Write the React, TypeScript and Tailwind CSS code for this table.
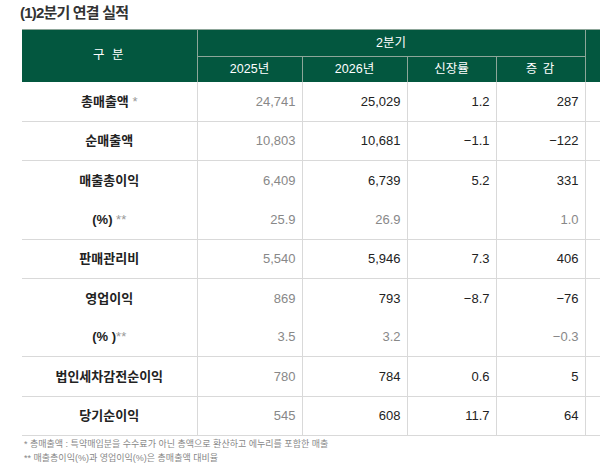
const font = { fontFamily: '"Liberation Sans", "Noto Sans CJK KR", sans-serif' };

type Row = {
  label: string;
  mark?: string;
  v: [string, string, string, string];
  sub?: boolean;
  line: boolean;
  h: string;
};

const rows: Row[] = [
  { label: "총매출액", mark: " *", v: ["24,741", "25,029", "1.2", "287"], line: true, h: "h-[40px]" },
  { label: "순매출액", v: ["10,803", "10,681", "\u22121.1", "\u2212122"], line: true, h: "h-[39px]" },
  { label: "매출총이익", v: ["6,409", "6,739", "5.2", "331"], line: false, h: "h-[40px]" },
  { label: "(%)", mark: " **", v: ["25.9", "26.9", "", "1.0"], sub: true, line: true, h: "h-[39px]" },
  { label: "판매관리비", v: ["5,540", "5,946", "7.3", "406"], line: true, h: "h-[39px]" },
  { label: "영업이익", v: ["869", "793", "\u22128.7", "\u221276"], line: false, h: "h-[39px]" },
  { label: "(% )", mark: "**", v: ["3.5", "3.2", "", "\u22120.3"], sub: true, line: true, h: "h-[39px]" },
  { label: "법인세차감전순이익", v: ["780", "784", "0.6", "5"], line: true, h: "h-[40px]" },
  { label: "당기순이익", v: ["545", "608", "11.7", "64"], line: true, h: "h-[39px]" },
];

export default function App() {
  return (
    <div className="w-[600px] h-[471px] overflow-hidden bg-white" style={font}>
      <h2 className="pl-[20px] pt-[3px] h-[29px] text-[15px] font-bold tracking-[-0.8px] text-[#333] leading-[20px]">
        (1)2분기 연결 실적
      </h2>
      <table className="ml-[22px] table-fixed border-collapse w-[700px]">
        <colgroup>
          <col className="w-[175px]" />
          <col className="w-[105px]" />
          <col className="w-[105px]" />
          <col className="w-[89px]" />
          <col className="w-[89px]" />
          <col className="w-[137px]" />
        </colgroup>
        <thead className="bg-[#03573f] text-white text-[12.5px]">
          <tr className="h-[27px]">
            <th rowSpan={2} className="font-normal border-t border-[#8da699] border-r">
              <span className="tracking-[2px]">구 분</span>
            </th>
            <th colSpan={4} className="font-normal border-t border-b border-r border-[#8da699]">
              2분기
            </th>
            <th className="border-t border-[#8da699]" rowSpan={2}></th>
          </tr>
          <tr className="h-[25px]">
            <th className="font-normal border-r border-[#8da699]">2025년</th>
            <th className="font-normal border-r border-[#8da699]">2026년</th>
            <th className="font-normal border-r border-[#8da699]">신장률</th>
            <th className="font-normal border-r border-[#8da699]">
              <span className="tracking-[1px]">증 감</span>
            </th>
          </tr>
        </thead>
        <tbody className="text-[13px]">
          {rows.map((r, i) => (
            <tr key={i} className={`${r.h} ${r.line ? "border-b border-[#d9d9d9]" : ""}`}>
              <td className="text-center font-bold text-[#222] border-r border-[#d9d9d9]">
                {r.label}
                {r.mark && <span className="text-[#999] font-normal">{r.mark}</span>}
              </td>
              {r.v.map((v, j) => (
                <td
                  key={j}
                  className={`text-right pr-[6px] border-r border-[#d9d9d9] ${
                    j === 0 || r.sub ? "text-[#888]" : "text-[#222]"
                  }`}
                >
                  {v}
                </td>
              ))}
              <td></td>
            </tr>
          ))}
        </tbody>
      </table>
      <div className="pl-[24px] pt-[1px] text-[9px] leading-[14px] text-[#888]">
        <p>* 총매출액 : 특약매입분을 수수료가 아닌 총액으로 환산하고 에누리를 포함한 매출</p>
        <p>** 매출총이익(%)과 영업이익(%)은 총매출액 대비율</p>
      </div>
    </div>
  );
}
